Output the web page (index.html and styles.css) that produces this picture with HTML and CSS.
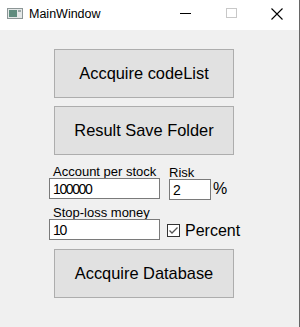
FILE: index.html
```html
<!DOCTYPE html>
<html>
<head lang="en">
    <title>MainWindow</title>
    <link rel="stylesheet" href="styles.css">
</head>
<body>
    <div class="window">
        <div class="titlebar">
            <svg class="app-icon" width="16" height="11" viewBox="0 0 16 11">
                <rect x="0.5" y="0.5" width="15" height="10" fill="#e4e8e8" stroke="#8c9696"/>
                <rect x="2" y="2" width="8" height="7" fill="#5f8c7e"/>
                <rect x="11" y="2" width="3" height="2" fill="#9aa6a6"/>
            </svg>
            <span class="title">MainWindow</span>
            <div class="caption">
                <span class="cap-btn">
                    <svg width="11" height="11" viewBox="0 0 11 11"><line x1="0" y1="5.5" x2="11" y2="5.5" stroke="#000"/></svg>
                </span>
                <span class="cap-btn">
                    <svg width="11" height="11" viewBox="0 0 11 11"><rect x="0.5" y="0.5" width="10" height="9" fill="none" stroke="#c8c8c8"/></svg>
                </span>
                <span class="cap-btn">
                    <svg width="12" height="12" viewBox="0 0 12 12"><path d="M0.5 0.5 L11.5 11.5 M11.5 0.5 L0.5 11.5" stroke="#000" stroke-width="1.1"/></svg>
                </span>
            </div>
        </div>

        <div class="client">
            <button class="push">Accquire codeList</button>
            <button class="push">Result Save Folder</button>

            <div class="form">
                <div class="row">
                    <div class="field">
                        <label>Account per stock</label>
                        <input class="edit wide" type="text" value="100000">
                    </div>
                    <div class="field risk">
                        <label>Risk</label>
                        <input class="edit narrow" type="text" value="2">
                    </div>
                    <span class="unit">%</span>
                </div>
                <div class="row second">
                    <div class="field">
                        <label>Stop-loss money</label>
                        <input class="edit wide" type="text" value="10">
                    </div>
                    <span class="check">
                        <svg width="13" height="13" viewBox="0 0 13 13">
                            <rect x="0.5" y="0.5" width="12" height="12" fill="#fff" stroke="#333"/>
                            <path d="M2.5 6.5 L5 9 L10.5 3.5" fill="none" stroke="#555" stroke-width="1.3"/>
                        </svg>
                    </span>
                    <span class="check-text">Percent</span>
                </div>
            </div>

            <button class="push last">Accquire Database</button>
        </div>
    </div>
</body>
</html>
```

FILE: styles.css
```css
body {
    margin: 0;
    font-family: "Liberation Sans", Arial, sans-serif;
    color: #000;
}

.window {
    width: 299px;
    height: 327px;
    border-right: 1px solid #666;
    background-color: #f0f0f0;
}

.titlebar {
    height: 30px;
    background-color: #fff;
    display: flex;
    align-items: center;
}

.app-icon {
    margin-left: 7px;
    margin-top: -3px;
}

.title {
    margin-left: 6px;
    font-size: 12.5px;
    margin-top: -3px;
}

.caption {
    margin-left: auto;
    display: flex;
    height: 30px;
}

.cap-btn {
    width: 46px;
    display: flex;
    align-items: center;
    justify-content: center;
    padding-bottom: 3px;
}

.cap-btn:last-child {
    width: 45px;
}

.client {
    padding-top: 19px;
    display: flex;
    flex-direction: column;
    align-items: flex-start;
}

.push {
    display: block;
    width: 180px;
    height: 49px;
    margin: 0 0 8px 54px;
    background-color: #e1e1e1;
    border: 1px solid #adadad;
    border-radius: 0;
    font-family: "Liberation Sans", Arial, sans-serif;
    font-size: 16.4px;
    color: #000;
    padding: 0;
}

.form {
    margin: 3px 0 0 49px;
}

.row {
    display: flex;
    align-items: flex-end;
}

.row.second {
    margin-top: 7px;
}

.field {
    display: flex;
    flex-direction: column;
}

.field label {
    font-size: 13px;
    line-height: 12px;
    height: 12px;
    padding-left: 4px;
}

.row.second .field label {
    line-height: 13px;
    height: 13px;
}

.risk {
    margin-left: 9px;
    margin-top: 1px;
}

.risk label {
    padding-left: 0;
}

.edit {
    box-sizing: border-box;
    height: 21px;
    border: 1px solid #7a7a7a;
    background-color: #fff;
    padding: 0 0 0 3px;
    margin: 0;
    font-family: "Liberation Sans", Arial, sans-serif;
    font-size: 14px;
    letter-spacing: -1.4px;
    color: #000;
    outline: none;
}

.edit.wide {
    width: 111px;
}

.edit.narrow {
    width: 42px;
}

.risk .edit {
    margin-bottom: -1px;
}

.unit {
    font-size: 16px;
    line-height: 16px;
    margin-left: 2px;
    margin-bottom: 2px;
}

.check {
    display: block;
    height: 13px;
    margin-left: 7px;
    margin-bottom: 3px;
}

.check svg {
    display: block;
}

.check-text {
    font-size: 16px;
    line-height: 16px;
    margin-left: 5px;
    margin-bottom: 1px;
}

.push.last {
    margin-top: 9px;
}
```
